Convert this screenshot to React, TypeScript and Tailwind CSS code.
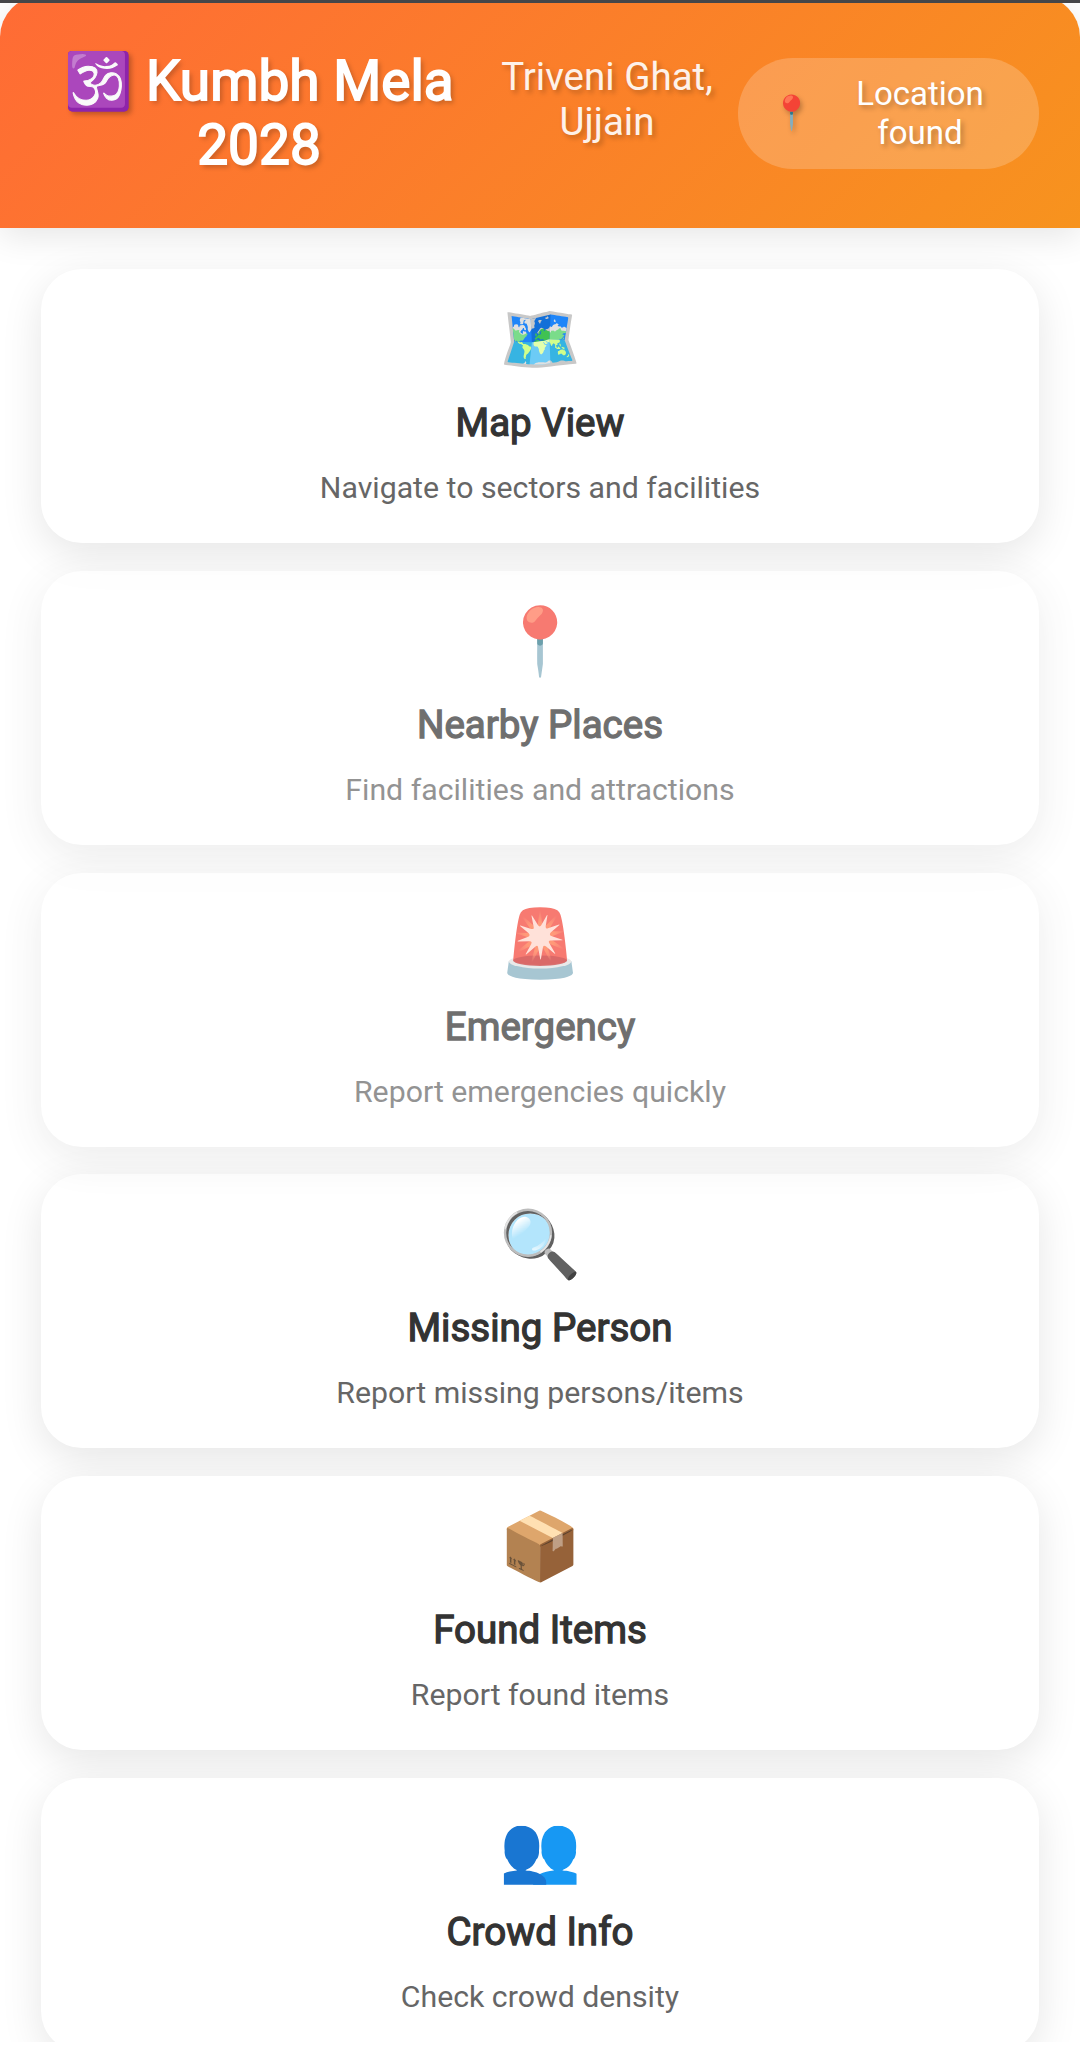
type Feature = { icon: string; title: string; text: string; muted?: boolean };

const features: Feature[] = [
  { icon: '🗺️', title: 'Map View', text: 'Navigate to sectors and facilities' },
  { icon: '📍', title: 'Nearby Places', text: 'Find facilities and attractions', muted: true },
  { icon: '🚨', title: 'Emergency', text: 'Report emergencies quickly', muted: true },
  { icon: '🔍', title: 'Missing Person', text: 'Report missing persons/items' },
  { icon: '📦', title: 'Found Items', text: 'Report found items' },
  { icon: '👥', title: 'Crowd Info', text: 'Check crowd density' },
];

function Header() {
  return (
    <header className="-mt-[7px] flex h-[232px] shrink-0 items-start bg-[linear-gradient(135deg,#ff6b35_0%,#f7931e_100%)] pl-[64px] pr-[41px] text-center text-white shadow-[0_8px_34px_rgba(0,0,0,0.1)] rounded-t-[41px] [text-shadow:2.75px_2.75px_5.5px_rgba(0,0,0,0.25)]">
      <h1 className="mt-[53px] w-[390px] shrink-0 text-[55px] leading-[64px] font-normal [-webkit-text-stroke:1.8px_white]">
        🕉️ Kumbh Mela
        <br />
        2028
      </h1>
      <p className="mt-[58px] ml-[47px] w-[212px] shrink-0 whitespace-nowrap text-[38.5px] leading-[45px] opacity-90">
        Triveni Ghat,
        <br />
        Ujjain
      </p>
      <div className="mt-[62px] ml-[25px] flex h-[111px] grow items-center rounded-[55px] bg-white/20 text-[33px] leading-[38.5px]">
        <span className="ml-[32px] w-[42px]">📍</span>
        <span className="ml-[43px] w-[130px]">
          Location
          <br />
          found
        </span>
      </div>
    </header>
  );
}

function FeatureCard({ icon, title, text, muted }: Feature) {
  return (
    <section
      className={`flex h-[274px] shrink-0 flex-col items-center rounded-[41px] bg-white pt-[33px] text-center shadow-[0_11px_41px_rgba(0,0,0,0.1)] ${
        muted ? 'opacity-70' : ''
      }`}
    >
      <div className="text-[66px] leading-[76px]">{icon}</div>
      <h2 className="mt-[22px] text-[38.5px] leading-[45px] font-normal text-[#333] [-webkit-text-stroke:1.3px_#333]">{title}</h2>
      <p className="mt-[25px] text-[30.25px] leading-[36px] text-[#666]">{text}</p>
    </section>
  );
}

export default function App() {
  return (
    <div className="h-[2049px] overflow-hidden bg-white font-[Roboto,sans-serif]">
      <div className="flex h-[2042px] flex-col overflow-hidden">
        <div className="relative z-10 h-[3px] shrink-0 bg-[#454649]" />
        <Header />
        <main className="flex flex-col gap-[27.75px] px-[41px] pt-[41px]">
          {features.map((f) => (
            <FeatureCard key={f.title} {...f} />
          ))}
        </main>
      </div>
    </div>
  );
}
